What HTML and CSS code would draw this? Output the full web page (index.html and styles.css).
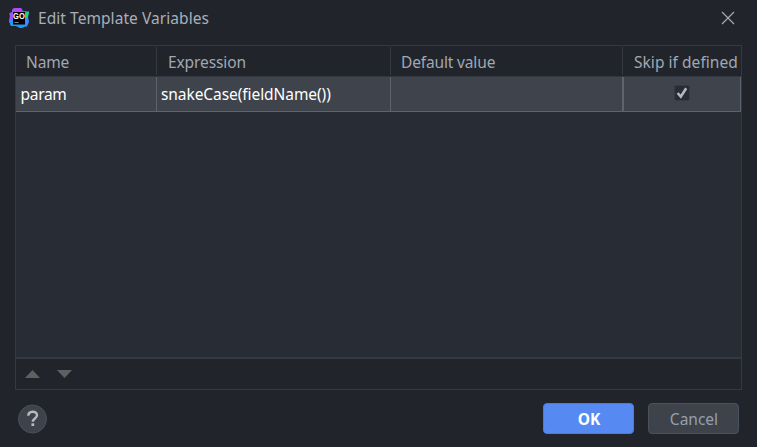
FILE: index.html
```html
<!DOCTYPE html>
<html lang="en">
<head>
<meta charset="utf-8">
<title>Edit Template Variables</title>
<link rel="stylesheet" href="styles.css">
</head>
<body>
<div class="dialog">
  <header class="titlebar">
    <svg class="logo" width="22" height="22" viewBox="0 0 22 22">
      <path d="M4 1.500L7 0h6l2 3 6 .5-1 5 1 5.500-2 4.500-4 .5-3 1-4-2H3l-2-5 1-5-.5-3L4 4z" fill="#3f86ff"/>
      <path d="M6 0h7l2 4H5L4 2z" fill="#b14bf0"/>
      <path d="M1.500 5.500L5 4v8l-3.500 1 .5-4z" fill="#a050f5"/>
      <path d="M1 13l4-1v4.500l6 .5 6 .5-1.500 2-3 .5-4-2H3z" fill="#159dff"/>
      <path d="M17 5l4-1.500-1 5.500-3 1.500z" fill="#20d67a"/>
      <rect x="5" y="4" width="12" height="12.500" fill="#000"/>
      <text class="logo-text" x="5" y="11" textLength="11.800" lengthAdjust="spacingAndGlyphs">GO</text>
      <path d="M6.500 14.500h4" stroke="#888" stroke-width="1"/>
    </svg>
    <h1 class="title">Edit Template Variables</h1>
    <svg class="close" width="14" height="14" viewBox="0 0 14 14"><path d="M1 1l12 12M13 1L1 13"/></svg>
  </header>
  <main class="panel">
    <div class="grid head">
      <span class="name">Name</span><span class="expression">Expression</span><span class="default">Default value</span><span class="skip">Skip if defined</span>
    </div>
    <div class="grid row">
      <span class="param">param</span><span class="value">snakeCase(fieldName())</span><span></span>
      <span class="check-cell"><svg width="16" height="16" viewBox="0 0 16 16"><rect x=".5" y=".5" width="15" height="15" rx="2" fill="#282c34" stroke="#363b44"/><path d="M3.600 8l3.200 3.600 5.400-8.400" fill="none" stroke="#b4bac5" stroke-width="2.500"/></svg></span>
    </div>
    <div class="empty"></div>
    <div class="toolbar">
      <svg width="15" height="8" viewBox="0 0 15 8"><path d="M0 8L7.500 0 15 8z"/></svg>
      <svg width="15" height="8" viewBox="0 0 15 8"><path d="M0 0h15L7.500 8z"/></svg>
    </div>
  </main>
  <footer class="footer">
    <svg class="help" width="30" height="30" viewBox="0 0 30 30"><circle cx="15.500" cy="15" r="14" fill="#3d424b" stroke="#4b515c"/><path d="M11.300 11.800c0-5.300 8.700-5.300 8.700-.6 0 3.300-4.200 3.200-4.200 6.600" fill="none" stroke="#b6b9be" stroke-width="2.400"/><rect x="14.400" y="19.300" width="2.800" height="2.700" fill="#b6b9be"/></svg>
    <button class="button ok"><span>OK</span></button>
    <button class="button cancel"><span>Cancel</span></button>
  </footer>
</div>
</body>
</html>
```
FILE: styles.css
```css
* { box-sizing: border-box; }
body {
  margin: 0;
  background: #21252b;
  color: #a0a7b4;
  font: 15.5px/20px "Noto Sans", "Open Sans", sans-serif;
}
.dialog {
  width: 757px;
  height: 447px;
  display: flex;
  flex-direction: column;
  overflow: hidden;
}
.titlebar {
  height: 45px;
  padding: 8px 22px 0 8px;
  display: flex;
  align-items: flex-start;
}
.logo-text { font: bold 8.5px "Liberation Sans", sans-serif; fill: #fff; }
.title {
  margin: 0 auto 0 8px;
  font-size: 15.5px;
  line-height: 20px;
  font-weight: 400;
  letter-spacing: .06px;
  color: #a9afb9;
  white-space: nowrap;
}
.close { margin-top: 3px; fill: none; stroke: #a8abae; stroke-width: 1.2; }
.panel {
  width: 727px;
  height: 345px;
  margin-left: 15px;
  border: 1px solid #333841;
  display: flex;
  flex-direction: column;
}
.grid { display: grid; grid-template-columns: 141px 234px 232px 1fr; }
.grid span { white-space: nowrap; }
.head { height: 31px; border-bottom: 1px solid #333841; }
.head span {
  height: 28px;
  margin-top: 1px;
  padding: 5px 0 0 10px;
  border-right: 1px solid #333841;
}
.head .name { letter-spacing: -.15px; }
.head .expression { padding-left: 11px; letter-spacing: -.1px; }
.head .default { letter-spacing: -.15px; }
.head .skip { border-right: 0; padding-left: 11px; letter-spacing: .04px; }
.row {
  height: 35px;
  background: #3e434c;
  border-bottom: 1px solid #5d6470;
  color: #fff;
}
.row span { padding: 7px 0 0 4px; border-right: 1px solid #5d6470; }
.row .param { letter-spacing: -.3px; padding-left: 4.5px; }
.row .value { letter-spacing: -.07px; }
.row .check-cell {
  border-left: 1px solid #5d6470;
  padding: 8px 0 0;
  display: flex;
  justify-content: center;
}
.empty { flex: 1; background: #282c34; }
.toolbar {
  height: 32px;
  border-top: 2px solid #333841;
  padding: 11px 0 0 9px;
  display: flex;
  gap: 17px;
  fill: #5f6062;
}
.footer { height: 57px; padding: 13px 18px 0 17px; display: flex; }
.help { margin: 1px auto 0 0; }
.button {
  width: 91px;
  height: 31px;
  padding: 0;
  border: 1px solid #4b515c;
  border-radius: 4px;
  background: #3d424b;
  color: #989fab;
  font: inherit;
}
.cancel { padding-left: 1px; }
.ok {
  margin-right: 14px;
  padding-left: 1px;
  background: #568af2;
  border-color: #4c7bd9;
  color: #fff;
  font-weight: 700;
}
```
